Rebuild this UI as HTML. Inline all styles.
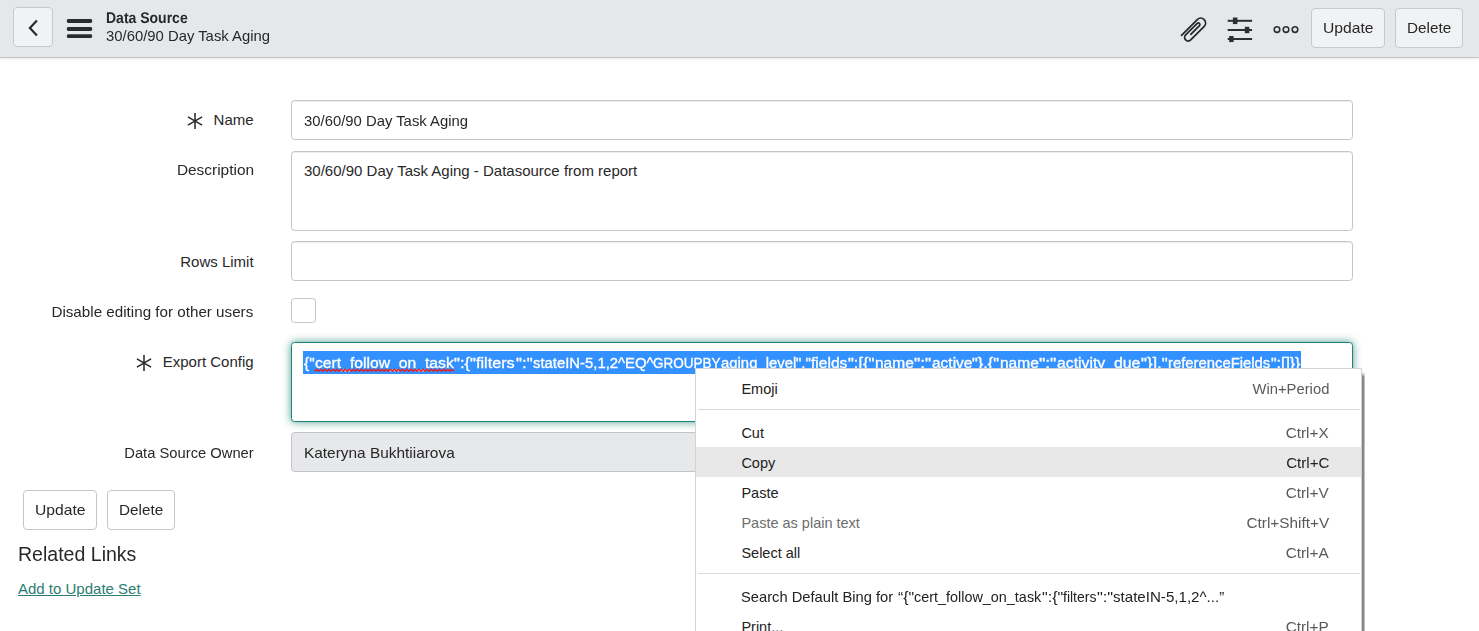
<!DOCTYPE html>
<html>
<head>
<meta charset="utf-8">
<title>Data Source</title>
<style>
*{box-sizing:border-box;margin:0;padding:0}
html,body{width:1479px;height:631px;overflow:hidden;background:#fff}
body{font-family:"Liberation Sans",sans-serif;font-size:15px;color:#282828;position:relative}
.abs{position:absolute}
.t{position:absolute;white-space:nowrap;display:inline-block;line-height:20px;height:20px}
.tl{transform-origin:0 50%}
.tr{transform-origin:100% 50%}
/* header */
#hdr{position:absolute;left:0;top:0;width:1479px;height:58px;background:#e5e8eb;border-bottom:1px solid #c4c7c9;box-shadow:0 1px 3px rgba(0,0,0,.10)}
.hbtn{position:absolute;background:#f1f2f4;border:1px solid #c8caca;border-radius:4px}
.btn{position:absolute;background:#fff;border:1px solid #c4c7ca;border-radius:4px}
/* form */
.inp{position:absolute;left:291px;width:1062px;background:#fff;border:1px solid #c4c5c7;border-radius:3.5px;box-shadow:inset 0 1px 1px rgba(0,0,0,.075)}
.lbl{right:1225.4px}
/* context menu */
#menu{position:absolute;left:695px;top:368px;width:667px;height:300px;background:#fff;border:1px solid #d2d2da}
.mi{position:absolute;left:0;width:665px;height:30px}
.mi .t{top:6px;font-size:14.5px;color:#222}
.mi .l{left:45.4px}
.mi .r{right:32px;color:#5a5a5a;transform:scaleX(1.058)}
.x{position:absolute;top:352.7px;-webkit-text-stroke:.35px #fff;font-size:15.5px;line-height:20px;height:20px;color:#fff;white-space:pre;transform-origin:0 50%;display:inline-block}
.sep{position:absolute;left:2px;width:662px;height:1px;background:#d9d9de}
</style>
</head>
<body>

<!-- HEADER -->
<div id="hdr">
  <div class="hbtn" style="left:13px;top:7px;width:40px;height:40px"></div>
  <svg class="abs" style="left:13px;top:7px" width="40" height="40" viewBox="0 0 40 40"><path d="M23.9 13.6 L16.9 21.1 L23.9 28.6" fill="none" stroke="#2a2a2a" stroke-width="2.2" stroke-linecap="butt" stroke-linejoin="miter"/></svg>
  <svg class="abs" style="left:66px;top:17px" width="28" height="24" viewBox="0 0 28 24"><g fill="#2b2b2b"><rect x="0.9" y="2" width="25.2" height="4" rx="1.4"/><rect x="0.9" y="10" width="25.2" height="4" rx="1.4"/><rect x="0.9" y="17.3" width="25.2" height="3.8" rx="1.4"/></g></svg>
  <span id="t_ds" class="t tl" style="left:106px;top:9px;font-weight:bold;font-size:15.5px;text-rendering:geometricPrecision;transform:scaleX(.903)">Data Source</span>
  <span id="t_sub" class="t tl" style="left:106px;top:26px;transform:scaleX(.99)">30/60/90 Day Task Aging</span>

  <svg class="abs" style="left:1176px;top:12px" width="36" height="34" viewBox="0 0 36 34"><path d="M5.53 23.31 L21.31 7.52 A4.90 4.90 0 0 1 28.24 14.44 L14.70 27.98 A3.56 3.56 0 0 1 9.66 22.94 L21.25 11.36 A1.58 1.58 0 0 1 23.48 13.59 L14.77 22.31" fill="none" stroke="#262626" stroke-width="1.75" stroke-linecap="round"/></svg>
  <svg class="abs" style="left:1224px;top:14px" width="32" height="32" viewBox="0 0 32 32"><g fill="#2e2e2e"><rect x="3.7" y="5.8" width="24.4" height="2"/><rect x="8.9" y="3.5" width="4.5" height="6.6"/><rect x="3.7" y="15" width="24.4" height="2"/><rect x="20.8" y="12.8" width="4.5" height="6.4"/><rect x="3.7" y="24" width="24.4" height="2"/><rect x="5.2" y="22" width="4.4" height="6.1"/></g></svg>
  <svg class="abs" style="left:1270px;top:22px" width="32" height="16" viewBox="0 0 32 16"><g fill="none" stroke="#2e2e2e" stroke-width="1.6"><circle cx="7" cy="7.6" r="2.8"/><circle cx="16" cy="7.6" r="2.8"/><circle cx="25" cy="7.6" r="2.8"/></g></svg>
  <div class="hbtn" style="left:1311px;top:8px;width:74px;height:39.6px"></div>
  <span id="t_hup" class="t tl" style="left:1323px;top:17.6px;transform:scaleX(1.045)">Update</span>
  <div class="hbtn" style="left:1395px;top:8px;width:68px;height:39.6px"></div>
  <span id="t_hdel" class="t tl" style="left:1407.3px;top:17.6px;transform:scaleX(1.02)">Delete</span>
</div>

<!-- FORM -->
<svg class="abs" style="left:186px;top:111.9px" width="18" height="18" viewBox="0 0 18 18"><path d="M9 1.1V16.9M1.9 4.9L16.1 13.1M1.9 13.1L16.1 4.9" fill="none" stroke="#2b2b2b" stroke-width="1.55"/></svg>
<span id="l_name" class="t tr lbl" style="top:110px">Name</span>
<div class="inp" style="top:100px;height:40px"></div>
<span id="v_name" class="t tl" style="left:304px;top:111px;transform:scaleX(.99)">30/60/90 Day Task Aging</span>

<span id="l_desc" class="t tr lbl" style="top:160px;transform:scaleX(1.028)">Description</span>
<div class="inp" style="top:151px;height:80px"></div>
<span id="v_desc" class="t tl" style="left:304px;top:161px">30/60/90 Day Task Aging - Datasource from report</span>

<span id="l_rows" class="t tr lbl" style="top:252px">Rows Limit</span>
<div class="inp" style="top:241px;height:40px"></div>

<span id="l_dis" class="t tr lbl" style="top:302px;transform:scaleX(1.013)">Disable editing for other users</span>
<div class="inp" style="top:298px;width:25px;height:25px;box-shadow:none"></div>

<svg class="abs" style="left:134.9px;top:353.9px" width="18" height="18" viewBox="0 0 18 18"><path d="M9 1.1V16.9M1.9 4.9L16.1 13.1M1.9 13.1L16.1 4.9" fill="none" stroke="#2b2b2b" stroke-width="1.55"/></svg>
<span id="l_exp" class="t tr lbl" style="top:352px">Export Config</span>
<div class="inp" style="top:342px;height:80px;border-color:#1f8476;box-shadow:0 0 9px rgba(31,132,118,.8)"></div>
<div class="abs" style="left:303px;top:351px;width:998px;height:23px;background:#3390ff"></div>
<div id="v_exp">
<span class="x" style="left:304.0px;transform:scaleX(0.9918)">{"</span>
<span class="x" style="left:314.6px;transform:scaleX(1.0131)">cert_follow_on_task</span>
<span class="x" style="left:454.0px;transform:scaleX(1.0732)">":{"</span>
<span class="x" style="left:476.3px;transform:scaleX(1.0446)">filters</span>
<span class="x" style="left:515.6px;transform:scaleX(1.0841)">":"</span>
<span class="x" style="left:532.5px;transform:scaleX(0.9564)">stateIN-</span>
<span class="x" style="left:584.6px;transform:scaleX(0.9605)">5,1,2^EQ^</span>
<span class="x" style="left:653.2px;transform:scaleX(0.8708)">GROUPBY</span>
<span class="x" style="left:720.5px;transform:scaleX(0.9600)">aging_level</span>
<span class="x" style="left:796.3px;transform:scaleX(0.9731)">","</span>
<span class="x" style="left:811.3px;transform:scaleX(1.0059)">fields</span>
<span class="x" style="left:848.2px;transform:scaleX(1.0647)">":[{"</span>
<span class="x" style="left:874.7px;transform:scaleX(1.0005)">name</span>
<span class="x" style="left:913.9px;transform:scaleX(1.1167)">":"</span>
<span class="x" style="left:931.7px;transform:scaleX(0.9975)">active</span>
<span class="x" style="left:972.4px;transform:scaleX(1.0517)">"},{"</span>
<span class="x" style="left:999.7px;transform:scaleX(1.0005)">name</span>
<span class="x" style="left:1038.7px;transform:scaleX(1.1298)">":"</span>
<span class="x" style="left:1056.7px;transform:scaleX(1.0188)">activity_due</span>
<span class="x" style="left:1140.6px;transform:scaleX(1.0727)">"}],"</span>
<span class="x" style="left:1167.6px;transform:scaleX(0.9567)">referenceFields</span>
<span class="x" style="left:1271.0px;transform:scaleX(1.0215)">":[]}}</span>
</div>
<svg class="abs" style="left:314px;top:367px" width="141" height="7" viewBox="0 0 141 7"><path d="M0.5 4.3 L2.55 2.2 L4.60 4.3 L6.65 2.2 L8.70 4.3 L10.75 2.2 L12.80 4.3 L14.85 2.2 L16.90 4.3 L18.95 2.2 L21.00 4.3 L23.05 2.2 L25.10 4.3 L27.15 2.2 L29.20 4.3 L31.25 2.2 L33.30 4.3 L35.35 2.2 L37.40 4.3 L39.45 2.2 L41.50 4.3 L43.55 2.2 L45.60 4.3 L47.65 2.2 L49.70 4.3 L51.75 2.2 L53.80 4.3 L55.85 2.2 L57.90 4.3 L59.95 2.2 L62.00 4.3 L64.05 2.2 L66.10 4.3 L68.15 2.2 L70.20 4.3 L72.25 2.2 L74.30 4.3 L76.35 2.2 L78.40 4.3 L80.45 2.2 L82.50 4.3 L84.55 2.2 L86.60 4.3 L88.65 2.2 L90.70 4.3 L92.75 2.2 L94.80 4.3 L96.85 2.2 L98.90 4.3 L100.95 2.2 L103.00 4.3 L105.05 2.2 L107.10 4.3 L109.15 2.2 L111.20 4.3 L113.25 2.2 L115.30 4.3 L117.35 2.2 L119.40 4.3 L121.45 2.2 L123.50 4.3 L125.55 2.2 L127.60 4.3 L129.65 2.2 L131.70 4.3 L133.75 2.2 L135.80 4.3 L137.85 2.2 L139.90 4.3" fill="none" stroke="#ee1c16" stroke-width="1.35" stroke-linejoin="round"/></svg>

<span id="l_own" class="t tr lbl" style="top:443px;transform:scaleX(.983)">Data Source Owner</span>
<div class="inp" style="top:432px;height:40px;background:#e6e8ea;box-shadow:none"></div>
<span id="v_own" class="t tl" style="left:303.5px;top:443px;transform:scaleX(1.027)">Kateryna Bukhtiiarova</span>

<div class="btn" style="left:23px;top:490px;width:74px;height:40px"></div>
<span id="t_up" class="t tl" style="left:35px;top:500px;transform:scaleX(1.045)">Update</span>
<div class="btn" style="left:107px;top:490px;width:68px;height:40px"></div>
<span id="t_del" class="t tl" style="left:119.3px;top:500px;transform:scaleX(1.02)">Delete</span>

<span id="t_rel" class="t tl" style="left:18px;top:539.5px;font-size:20.5px;line-height:28px;height:28px;transform:scaleX(.953)">Related Links</span>
<span id="t_add" class="t tl" style="left:18px;top:578.7px;color:#2a7d74;text-decoration:underline">Add to Update Set</span>

<!-- CONTEXT MENU -->
<div id="menu">
  <div class="mi" style="top:4px"><span class="t tl l">Emoji</span><span class="t tr r" style="transform:scaleX(1.02)">Win+Period</span></div>
  <div class="sep" style="top:40px"></div>
  <div class="mi" style="top:48px"><span class="t tl l">Cut</span><span class="t tr r">Ctrl+X</span></div>
  <div class="mi" style="top:78px;background:#e8e8e8"><span class="t tl l">Copy</span><span class="t tr r" style="color:#222;transform:scaleX(1.045)">Ctrl+C</span></div>
  <div class="mi" style="top:108px"><span class="t tl l">Paste</span><span class="t tr r">Ctrl+V</span></div>
  <div class="mi" style="top:138px"><span class="t tl l" style="color:#6d6d6d">Paste as plain text</span><span class="t tr r">Ctrl+Shift+V</span></div>
  <div class="mi" style="top:168px"><span class="t tl l">Select all</span><span class="t tr r">Ctrl+A</span></div>
  <div class="sep" style="top:204px"></div>
  <div class="mi" style="top:212px"><span class="t tl" style="left:45.0px;white-space:pre;transform:scaleX(1.0146)">Search Default Bing for </span><span class="t tl" style="left:201.8px;white-space:pre;transform:scaleX(1.0925)">“{"</span><span class="t tl" style="left:218.0px;white-space:pre;transform:scaleX(0.9932)">cert_follow_on_task</span><span class="t tl" style="left:345.6px;white-space:pre;transform:scaleX(1.1058)">":{"</span><span class="t tl" style="left:366.8px;white-space:pre;transform:scaleX(0.9666)">filters</span><span class="t tl" style="left:400.6px;white-space:pre;transform:scaleX(1.1306)">":"</span><span class="t tl" style="left:416.8px;white-space:pre;transform:scaleX(1.0418)">stateIN-5,1,2^...”</span></div>
  <div class="mi" style="top:242px"><span class="t tl l">Print...</span><span class="t tr r">Ctrl+P</span></div>
</div>
<div class="abs" style="left:1362px;top:372px;width:3px;height:300px;background:linear-gradient(to right,#808080 0,#8c8c8c 60%,rgba(160,160,160,.25) 100%);-webkit-mask-image:linear-gradient(to bottom,transparent 0,#000 5px);mask-image:linear-gradient(to bottom,transparent 0,#000 5px)"></div>

</body>
</html>
